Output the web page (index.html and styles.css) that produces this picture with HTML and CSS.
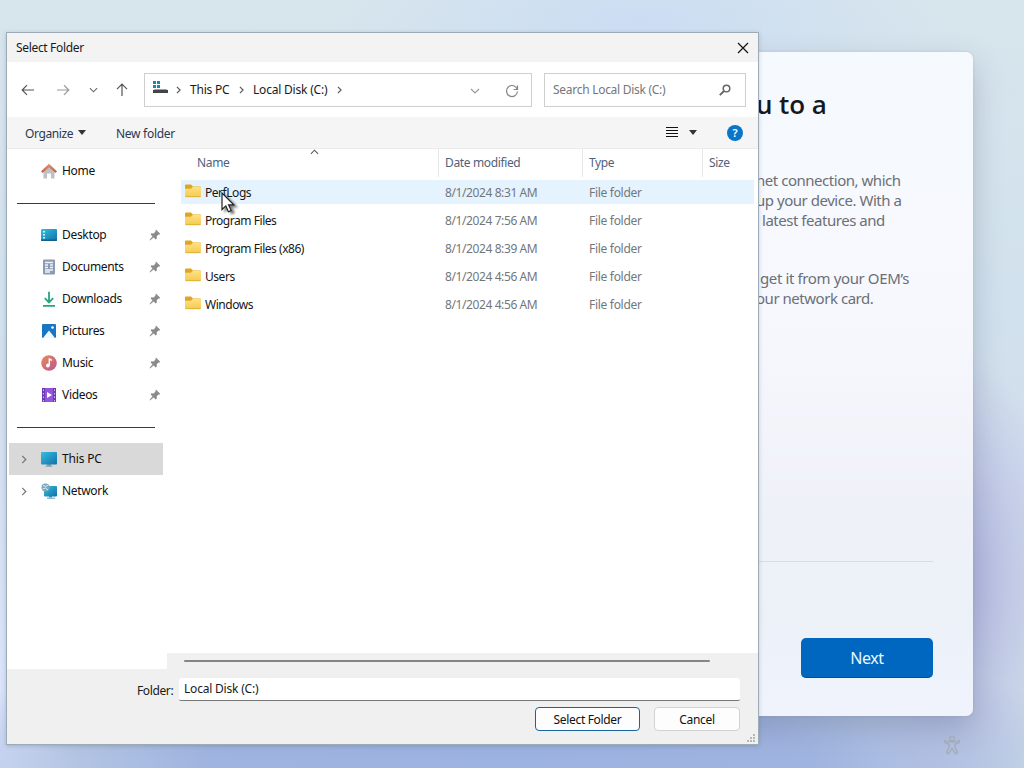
FILE: index.html
```html
<!DOCTYPE html>
<html lang="en">
<head>
<meta charset="utf-8">
<title>Select Folder</title>
<link rel="stylesheet" href="styles.css">
</head>
<body>
<svg class="defs" width="0" height="0">
  <defs>
    <linearGradient id="gFolder" x1="0" y1="0" x2="0" y2="1"><stop offset="0" stop-color="#ffe083"/><stop offset="1" stop-color="#f4cb50"/></linearGradient>
    <linearGradient id="gScreen" x1="0" y1="0" x2="1" y2="1"><stop offset="0" stop-color="#35bfe0"/><stop offset="1" stop-color="#1170a8"/></linearGradient>
    <linearGradient id="gRoof" x1="0" y1="0" x2="0" y2="1"><stop offset="0" stop-color="#e8906c"/><stop offset="1" stop-color="#bf5f4b"/></linearGradient>
    <linearGradient id="gMusic" x1="0" y1="0" x2="1" y2="1"><stop offset="0" stop-color="#e98b5b"/><stop offset="1" stop-color="#b9568e"/></linearGradient>
    <symbol id="folder" viewBox="0 0 16 14"><path d="M0 1.500q0-1 1-1h5l2 2h7q1 0 1 1V6H0z" fill="#dfa526"/><path d="M0 4.800h6l1.800-2H15q1 0 1 1V12q0 1-1 1H1q-1 0-1-1z" fill="url(#gFolder)"/><path d="M.5 12.700h15" stroke="#dba72f" stroke-width=".8"/></symbol>
    <symbol id="pin" viewBox="0 0 12 12"><path d="M7.200.8l4 4-.9.9-.9-.1-1.700 1.900.1 2.100-1 .9-2.200-2.100L1 11.400l-.5-.5 3-3.600L1.500 5.200l.9-.9 2.200.1 1.900-2-.2-.7z" fill="#8b8b8b"/></symbol>
    <symbol id="right" viewBox="0 0 6 10"><path d="M1 1l4 4-4 4" fill="none" stroke="currentColor" stroke-width="1.400"/></symbol>
    <symbol id="down" viewBox="0 0 10 6"><path d="M1 1l4 4 4-4" fill="none" stroke="currentColor" stroke-width="1.200"/></symbol>
  </defs>
</svg>

<div class="desktop">
  <section class="setup">
    <h1 class="setup-title">u to a</h1>
    <div class="setup-copy">
      <div>net connection, which</div>
      <div>up your device. With a</div>
      <div class="indent-latest">latest features and</div>
    </div>
    <div class="setup-copy second">
      <div class="indent-get">get it from your OEM’s</div>
      <div>our network card.</div>
    </div>
    <div class="setup-foot"><button class="next">Next</button></div>
  </section>
  <svg class="access" viewBox="0 0 18 20"><g fill="none" stroke="#a1aab5" stroke-width="1.300"><circle cx="9" cy="3.500" r="2.300"/><path d="M2 5.500q-1.200 1.500.5 2.300L6 9.200v3L3.800 17q0 2 2 1.500L9 13.500l3.200 5q2 .5 2-1.500L12 12.200v-3l3.500-1.400q1.700-.8.5-2.300-3 1.500-7 1.500t-7-1.500z"/></g></svg>

  <main class="dialog">
    <header class="titlebar"><span>Select Folder</span>
      <svg class="close" width="12" height="12" viewBox="0 0 12 12"><path d="M1 1l10 10M11 1L1 11" stroke="#111" stroke-width="1.200"/></svg>
    </header>
    <nav class="navbar">
      <div class="nav-icons">
        <svg width="14" height="12" viewBox="0 0 14 12"><path d="M13 6H1.500M6 1.200L1.200 6 6 10.800" fill="none" stroke="#555" stroke-width="1.200"/></svg>
        <svg width="14" height="12" viewBox="0 0 14 12"><path d="M1 6h11.500M8 1.200L12.800 6 8 10.800" fill="none" stroke="#999" stroke-width="1.200"/></svg>
        <svg class="c-dim" width="9" height="6"><use href="#down"/></svg>
        <svg width="12" height="14" viewBox="0 0 12 14"><path d="M6 13V1.500M1 6.200l5-5 5 5" fill="none" stroke="#555" stroke-width="1.200"/></svg>
      </div>
      <div class="address">
        <svg class="drive" width="16" height="14" viewBox="0 0 16 14"><path d="M1 0h3v3H1zM5 0h3v3H5zM1 4h3v3H1zM5 4h3v3H5z" fill="#1c87ad"/><path d="M2.500 8h12l1 1.500h-14z" fill="#9ba0a4"/><path d="M1 9h15v3H1z" fill="#3f4549"/></svg>
        <svg class="crumb-arrow" width="5" height="8"><use href="#right"/></svg>
        <span class="t-thispc">This PC</span>
        <svg class="crumb-arrow" width="5" height="8"><use href="#right"/></svg>
        <span class="t-disk">Local Disk (C:)</span>
        <svg class="crumb-arrow" width="5" height="8"><use href="#right"/></svg>
        <svg class="addr-down" width="10" height="6"><use href="#down"/></svg>
        <svg class="refresh" width="14" height="14" viewBox="0 0 14 14"><path d="M12.300 5.500A5.500 5.500 0 1 0 12.500 7.500M12.500 1.500v4h-4" fill="none" stroke="#858585" stroke-width="1.200"/></svg>
      </div>
      <div class="search"><span>Search Local Disk (C:)</span>
        <svg width="12" height="12" viewBox="0 0 12 12"><circle cx="7.500" cy="4.500" r="3.300" fill="none" stroke="#666" stroke-width="1.500"/><path d="M5 7L.8 11.200" stroke="#666" stroke-width="1.900"/></svg>
      </div>
    </nav>
    <div class="toolbar">
      <span class="organize">Organize</span><i class="caret"></i>
      <span class="newfolder">New folder</span>
      <svg class="view" width="12" height="11" viewBox="0 0 12 11"><path d="M0 .5h12M0 3.500h12M0 6.500h12M0 9.500h12" stroke="#111" stroke-width="1"/></svg>
      <i class="caret"></i>
      <span class="help">?</span>
    </div>
    <div class="content">
      <aside class="sidebar">
        <div class="side-item"><svg viewBox="0 0 16 16"><path d="M2.500 8L8 3l5.500 5v7.500H10v-5H6v5H2.500z" fill="#bfc0c4"/><path d="M0 8.200L8 .8l8 7.400-1.500 1.900L8 4.300 1.500 10.100z" fill="url(#gRoof)"/></svg><span>Home</span></div>
        <div class="rule"></div>
        <div class="side-item"><svg viewBox="0 0 16 16"><rect y="2" width="16" height="12" rx="1" fill="url(#gScreen)"/><path d="M2 4h2v1.500H2zM2 7h2v1.500H2zM2 10h2v1.500H2z" fill="#c8f3ff"/><path d="M0 12.500h16v.5q0 1-1 1H1q-1 0-1-1z" fill="#155f86"/></svg><span>Desktop</span><svg class="pin"><use href="#pin"/></svg></div>
        <div class="side-item"><svg viewBox="0 0 16 16"><rect x="2" y=".5" width="12" height="15" rx="1" fill="#8c9bb2"/><path d="M4 3.500h8M4 6h3M9 6h3M4 8.500h3M9 8.500h3M4 11h8M4 13h5" stroke="#eff5fc" stroke-width="1.300"/></svg><span>Documents</span><svg class="pin"><use href="#pin"/></svg></div>
        <div class="side-item"><svg viewBox="0 0 16 16"><path d="M8 .8v10.500M3.800 7.200L8 11.400l4.200-4.200M2 14.800h12" fill="none" stroke="#25a67c" stroke-width="1.800"/></svg><span>Downloads</span><svg class="pin"><use href="#pin"/></svg></div>
        <div class="side-item"><svg viewBox="0 0 16 16"><rect x="1" y="1" width="14" height="14" rx="1" fill="#1976c5"/><path d="M2 15l6-7.500 6 7.500z" fill="#f1f9ff"/><circle cx="11.500" cy="4.500" r="1.300" fill="#fff"/></svg><span>Pictures</span><svg class="pin"><use href="#pin"/></svg></div>
        <div class="side-item"><svg viewBox="0 0 16 16"><circle cx="8" cy="8" r="7.800" fill="url(#gMusic)"/><path d="M8.300 3.200v6.500M8.300 4l2.700 1.300" stroke="#fff" stroke-width="1.400" fill="none"/><circle cx="6.900" cy="10.500" r="1.900" fill="#fff"/></svg><span>Music</span><svg class="pin"><use href="#pin"/></svg></div>
        <div class="side-item"><svg viewBox="0 0 16 16"><rect x="1" y="1" width="14" height="14" rx="1" fill="#9355dc"/><path d="M1 1h3v14H1zM12 1h3v14h-3z" fill="#6a3cb5"/><path d="M2.500 2.500v12M13.500 2.500v12" stroke="#d7b6ff" stroke-dasharray="1.500 2"/><path d="M6 5l5 3-5 3z" fill="#fff"/></svg><span>Videos</span><svg class="pin"><use href="#pin"/></svg></div>
        <div class="rule"></div>
        <div class="side-item selected"><svg class="expander"><use href="#right"/></svg><svg viewBox="0 0 16 16"><path d="M6 13h4v2H6z" fill="#8d9aa1"/><rect y="1" width="16" height="12.500" rx="1" fill="url(#gScreen)"/><path d="M4.500 15.200h7" stroke="#8d9aa1"/></svg><span class="pc">This PC</span></div>
        <div class="side-item"><svg class="expander"><use href="#right"/></svg><svg viewBox="0 0 16 16"><path d="M8 12h3v2.500H8z" fill="#4d91b5"/><rect x="3" y="3" width="13" height="10.500" rx="1" fill="url(#gScreen)"/><path d="M6 15.200h8" stroke="#5a9bbb"/><circle cx="4.500" cy="4.500" r="4" fill="#79a9bc"/><path d="M2 2.500l3 1 2-1.500M1.500 6l3-1 2.500 2" stroke="#d5edf5" fill="none"/></svg><span>Network</span></div>
      </aside>
      <section class="files">
        <div class="head"><svg class="sort" viewBox="0 0 10 6"><path d="M1 5l4-4 4 4" fill="none" stroke="#555" stroke-width="1.200"/></svg><span>Name</span><span>Date modified</span><span>Type</span><span>Size</span></div>
        <div class="rows">
          <div class="row hover"><span class="name"><svg><use href="#folder"/></svg>PerfLogs</span><span class="date">8/1/2024 8:31 AM</span><span>File folder</span></div>
          <div class="row"><span class="name"><svg><use href="#folder"/></svg>Program Files</span><span class="date">8/1/2024 7:56 AM</span><span>File folder</span></div>
          <div class="row"><span class="name"><svg><use href="#folder"/></svg>Program Files (x86)</span><span class="date">8/1/2024 8:39 AM</span><span>File folder</span></div>
          <div class="row"><span class="name"><svg><use href="#folder"/></svg>Users</span><span class="date">8/1/2024 4:56 AM</span><span>File folder</span></div>
          <div class="row"><span class="name"><svg><use href="#folder"/></svg>Windows</span><span class="date">8/1/2024 4:56 AM</span><span>File folder</span></div>
        </div>
        <div class="hscroll"><div class="thumb"></div></div>
      </section>
    </div>
    <footer class="footer">
      <div class="field"><label>Folder:</label><div class="input">Local Disk (C:)</div></div>
      <div class="actions"><button class="btn primary">Select Folder</button><button class="btn cancel">Cancel</button></div>
      <svg class="grip" viewBox="0 0 9 9"><path d="M6 0h2v2H6zM3 3h2v2H3zM6 3h2v2H6zM0 6h2v2H0zM3 6h2v2H3zM6 6h2v2H6z" fill="#b5b8ba"/></svg>
    </footer>
  </main>
  <svg class="cursor" viewBox="0 0 14 22"><path d="M1 1v16.500l3.800-3.600 2.600 5.900 2.800-1.200-2.600-5.700h5.200z" fill="#fff" stroke="#222" stroke-width="1.200"/></svg>
</div>
</body>
</html>
```
FILE: styles.css
```css
* { box-sizing: border-box; }
body { margin: 0; font-family: "Noto Sans", "Open Sans", sans-serif; font-size: 12px; color: #1a1a1a; }
.defs { position: absolute; }
svg { display: block; flex: none; }
button { font: inherit; padding: 0; }
.desktop {
  position: relative; width: 1024px; height: 768px; overflow: hidden; white-space: nowrap;
  background:
    radial-gradient(ellipse 110px 230px at 955px 580px, rgba(170,172,222,.85), rgba(174,174,226,0)),
    radial-gradient(ellipse 620px 140px at 510px 768px, #9cb2e0 0%, rgba(158,178,224,.95) 50%, rgba(180,198,235,0) 100%),
    radial-gradient(ellipse 80px 330px at 0 700px, rgba(219,228,252,.9), rgba(219,228,252,0)),
    radial-gradient(ellipse 300px 90px at 640px 20px, rgba(200,219,245,.8), rgba(200,219,245,0)),
    linear-gradient(180deg, #d7e5ec 0%, #d1e1ed 40%, #d2ddec 65%, #d0dee8 100%);
}

/* setup wizard card */
.setup {
  position: absolute; left: 51px; top: 52px; width: 922px; height: 664px;
  display: flex; flex-direction: column; padding: 33px 40px 38px 705px; border-radius: 7px;
  background: linear-gradient(180deg, #f5fafe 0%, #f7f8fe 40%, #eff1f8 70%, #ecf1f8 85%, #f0f3fc 100%);
  box-shadow: 0 12px 30px rgba(70,80,110,.28), 0 0 3px rgba(80,90,120,.15);
}
.setup-title { margin: 0 0 47px; font: 600 26px/38px "Open Sans", sans-serif; letter-spacing: -.1px; color: #16181b; }
.setup-copy { font-size: 15px; line-height: 20px; letter-spacing: -.47px; color: #6c6f76; }
.setup-copy.second { margin-top: 38px; }
.second .indent-get { letter-spacing: -.38px; }
.indent-latest { padding-left: 6px; }
.indent-get { padding-left: 4px; }
.setup-foot { margin: auto 0 0 -665px; height: 117px; border-top: 1px solid #d5dce6; display: flex; justify-content: flex-end; align-items: flex-end; }
.next { width: 132px; height: 40px; border: 0; border-bottom: 1px solid #084c8b; border-radius: 5px; background: #0067c0; color: #e9f8ff; font-size: 16px; letter-spacing: -.4px; }
.access { position: absolute; left: 943px; top: 735px; width: 18px; height: 20px; }

/* file dialog */
.dialog {
  position: absolute; left: 6px; top: 32px; width: 753px; height: 713px;
  display: flex; flex-direction: column; border: 1px solid #9cabb6; background: #fff;
  box-shadow: 0 1px 4px rgba(60,80,110,.25);
}
.titlebar { height: 29px; padding: 0 9px; display: flex; align-items: center; justify-content: space-between; background: #f3f3f3; letter-spacing: -.33px; }
.navbar { height: 55px; padding: 0 12px 0 14px; display: flex; align-items: center; }
.nav-icons { width: 123px; display: flex; align-items: center; }
.nav-icons svg:nth-child(2) { margin-left: 21px; }
.nav-icons svg:nth-child(3) { margin-left: 19px; }
.nav-icons svg:nth-child(4) { margin-left: 18px; }
.c-dim { color: #666; }
.address { width: 388px; height: 34px; padding: 0 12px 0 7px; border: 1px solid #cfcfcf; display: flex; align-items: center; }
.drive { margin-bottom: 4px; }
.crumb-arrow { color: #555; margin: 0 9px 0 8px; }
.t-thispc { width: 41px; letter-spacing: -.2px; }
.t-disk { width: 76px; letter-spacing: -.2px; }
.address .t-disk + .crumb-arrow { margin-left: 8px; }
.addr-down { color: #999; margin: 2px 25px 0 auto; }
.refresh { margin-top: 2px; }
.search { width: 202px; height: 34px; margin-left: 12px; padding: 0 14px 0 8px; border: 1px solid #cfcfcf; display: flex; align-items: center; justify-content: space-between; color: #73777b; letter-spacing: -.28px; }
.toolbar { height: 31px; padding: 0 15px 0 18px; display: flex; align-items: center; background: #f5f5f5; color: #2c3852; }
.organize { width: 48px; letter-spacing: -.4px; padding-top: 1px; }
.newfolder { margin-left: 30px; letter-spacing: -.28px; padding-top: 1px; }
.caret { margin-left: 5px; border: 4px solid transparent; border-top: 5px solid #333; border-bottom: 0; }
.view { margin-left: auto; }
.view + .caret { margin-left: 11px; }
.help { width: 16px; height: 16px; margin-left: 30px; border-radius: 50%; background: #0b76c8; color: #fff; font-weight: 600; font-size: 11px; line-height: 16px; text-align: center; }
.content { flex: none; height: 521px; display: flex; border-top: 1px solid #ebebeb; }
.sidebar { width: 160px; padding: 6px 4px 0 2px; }
.side-item { position: relative; height: 32px; padding: 0 2px 0 32px; display: flex; align-items: center; gap: 5px; color: #111; letter-spacing: -.32px; }
.side-item > span { padding-bottom: 1px; }
.side-item > .pc { letter-spacing: -.18px; }
.side-item > svg { width: 16px; height: 16px; }
.side-item > .pin { width: 12px; height: 12px; margin-left: auto; }
.side-item > .expander { width: 6px; height: 9px; margin: 0 9px 0 -20px; color: #777; }
.selected { background: #d9d9d9; }
.rule { height: 32px; margin: 0 8px; background: linear-gradient(#343b43, #343b43) 0 16px / 100% 1px no-repeat; }
.files { flex: 1; display: flex; flex-direction: column; }
.head, .row { display: grid; grid-template-columns: 257px 144px 120px 52px; }
.head { position: relative; height: 28px; margin-left: 14px; color: #52627a; line-height: 27px; letter-spacing: -.36px; }
.head span { padding-left: 6px; border-left: 1px solid #e7e7e7; }
.head span:nth-child(2) { padding-left: 16px; border: 0; }
.sort { position: absolute; left: 129px; top: 0; width: 9px; height: 6px; }
.rows { display: flex; flex-direction: column; gap: 4px; padding: 3px 4px 0 14px; }
.row { height: 24px; align-items: center; color: #72777c; }
.row > span { padding-top: 1px; }
.row > span:nth-child(n+2) { padding-left: 7px; letter-spacing: -.3px; }
.row > .name { display: flex; align-items: center; gap: 4px; padding-left: 4px; color: #171717; letter-spacing: -.46px; }
.name svg { width: 16px; height: 14px; margin-top: -3px; }
.row > .date:nth-child(2) { letter-spacing: -.4px; }
.row.hover { background: #e5f3ff; }
.hscroll { height: 16px; margin-top: auto; padding: 7px 48px 0 17px; background: #f0f0f0; }
.thumb { height: 2px; border-radius: 1px; background: #858585; }
.footer { position: relative; flex: 1; padding: 9px 18px 0 130px; background: #f0f0f0; }
.field { display: flex; height: 23px; align-items: center; }
.field label { width: 42px; letter-spacing: -.38px; padding-top: 1px; }
.input { flex: 1; height: 23px; padding-left: 5px; line-height: 21px; background: #fff; border-bottom: 1px solid #777; border-radius: 3px 3px 2px 2px; letter-spacing: -.2px; }
.actions { display: flex; justify-content: flex-end; gap: 14px; margin-top: 6px; }
.btn { height: 24px; border: 1px solid #d2d2d2; border-radius: 4px; background: #fdfdfd; color: #111; letter-spacing: -.33px; }
.primary { width: 105px; border-color: #17659f; }
.cancel { width: 86px; }
.grip { position: absolute; right: 2px; bottom: 1px; width: 9px; height: 9px; }
.cursor { position: absolute; left: 221px; top: 192px; width: 14px; height: 22px; filter: drop-shadow(3px 2px 1px rgba(0,0,0,.5)); }
```
